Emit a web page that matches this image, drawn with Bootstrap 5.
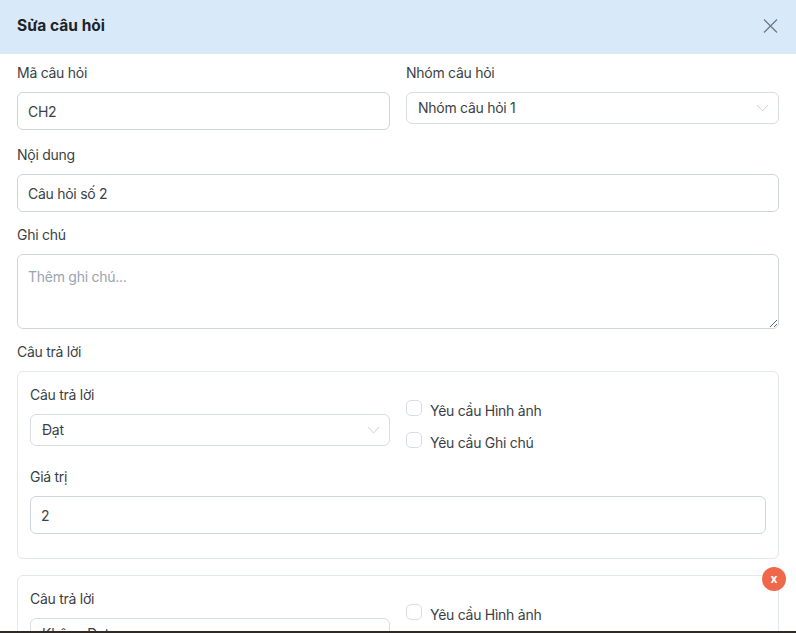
<!DOCTYPE html>
<html lang="vi">
<head>
<meta charset="utf-8">
<title>Sửa câu hỏi</title>
<link rel="stylesheet" href="https://cdn.jsdelivr.net/npm/bootstrap@5.3.0/dist/css/bootstrap.min.css">
<style>
html,body{height:633px;overflow:hidden}
body{font-family:Inter,"Noto Sans",sans-serif;font-size:14px;letter-spacing:-.27px;line-height:21px;color:#3b3f46;background:#fff;display:flex;flex-direction:column}
.pane{flex:1 1 auto;min-height:0;overflow:hidden}
.strip{flex:0 0 2px;background:#2f2a26}
.top-bar{height:54px;background:#d8eaf9;padding:0 17px 3px}
.top-bar h1{font-size:15.5px;font-weight:700;letter-spacing:0;color:#1f2329;margin:0;line-height:21px}
.x-btn{width:16px;height:16px;padding:0;border:0;background:none;margin-right:1px;line-height:0}
.form-body{padding:9px 17px 0}
.fld-label{display:block;margin-bottom:10px;line-height:19px;color:#3b3f46}
.form-control,.form-select{font-size:14px;letter-spacing:-.27px;line-height:21px;color:#3b3f46;border-color:#cfd5de;border-radius:6px}
.form-control{height:38px;padding:8px 10px}
textarea.form-control{height:75px;padding:11px 10px;display:block}
.form-control::placeholder{color:#9aa3b3}
.form-select{height:32px;padding:3px 30px 5px 11px;border-color:#d8dce3;background-size:13px 8px;background-position:right 9px center;
background-image:url("data:image/svg+xml,%3Csvg xmlns='http://www.w3.org/2000/svg' viewBox='0 0 13 8'%3E%3Cpath d='M1 1l5.5 6L12 1' fill='none' stroke='%23cdd1d8'/%3E%3C/svg%3E")}
.ans-box{border-color:#e3e7ee;border-radius:6px;padding:13px 12px 12px;margin-bottom:16px;position:relative}
.row-tight{--bs-gutter-x:16px}
.chk{display:flex;align-items:center;margin:0;height:32px}
.chk span{padding-top:4px}
.chk .form-check-input{width:16px;height:16px;margin:0 8px 0 0;border-color:#d8dce3;border-radius:5px;flex:none}
.chk-stack{padding-top:7px;height:61px}
.del-dot{position:absolute;top:-9px;right:-8px;width:24px;height:24px;padding:0;border:0;border-radius:50%;background:#f0684a;color:#fff;font-size:12px;font-weight:700;line-height:22px;text-align:center}
.gap-a{margin-bottom:15px}.gap-b{margin-bottom:13px}.gap-c{margin-bottom:21px}
.tail{height:12px}
</style>
</head>
<body>
<div class="pane">
  <div class="top-bar d-flex align-items-center justify-content-between">
    <h1>Sửa câu hỏi</h1>
    <button type="button" class="x-btn" aria-label="Đóng"><svg width="16" height="16" viewBox="0 0 16 16"><path d="M2 1.5l13 13M15 1.5l-13 13" fill="none" stroke="#6f7780" stroke-width="1.2"/></svg></button>
  </div>
  <form class="form-body">
    <div class="row row-tight gap-a">
      <div class="col-6">
        <label class="fld-label">Mã câu hỏi</label>
        <input class="form-control" value="CH2">
      </div>
      <div class="col-6">
        <label class="fld-label">Nhóm câu hỏi</label>
        <select class="form-select"><option>Nhóm câu hỏi 1</option></select>
      </div>
    </div>
    <div class="gap-b">
      <label class="fld-label">Nội dung</label>
      <input class="form-control" value="Câu hỏi số 2">
    </div>
    <div class="gap-b">
      <label class="fld-label">Ghi chú</label>
      <textarea class="form-control" placeholder="Thêm ghi chú..."></textarea>
    </div>
    <label class="fld-label">Câu trả lời</label>
    <div class="card ans-box">
      <div class="row row-tight gap-c">
        <div class="col-6">
          <label class="fld-label">Câu trả lời</label>
          <select class="form-select"><option>Đạt</option></select>
        </div>
        <div class="col-6 chk-stack">
          <label class="chk"><input type="checkbox" class="form-check-input"><span>Yêu cầu Hình ảnh</span></label>
          <label class="chk"><input type="checkbox" class="form-check-input"><span>Yêu cầu Ghi chú</span></label>
        </div>
      </div>
      <label class="fld-label">Giá trị</label>
      <input class="form-control" value="2">
      <div class="tail"></div>
    </div>
    <div class="card ans-box">
      <button type="button" class="del-dot">x</button>
      <div class="row row-tight gap-c">
        <div class="col-6">
          <label class="fld-label">Câu trả lời</label>
          <select class="form-select"><option>Không Đạt</option></select>
        </div>
        <div class="col-6 chk-stack">
          <label class="chk"><input type="checkbox" class="form-check-input"><span>Yêu cầu Hình ảnh</span></label>
          <label class="chk"><input type="checkbox" class="form-check-input"><span>Yêu cầu Ghi chú</span></label>
        </div>
      </div>
    </div>
  </form>
</div>
<div class="strip"></div>
<script src="https://cdn.jsdelivr.net/npm/bootstrap@5.3.0/dist/js/bootstrap.bundle.min.js"></script>
</body>
</html>
